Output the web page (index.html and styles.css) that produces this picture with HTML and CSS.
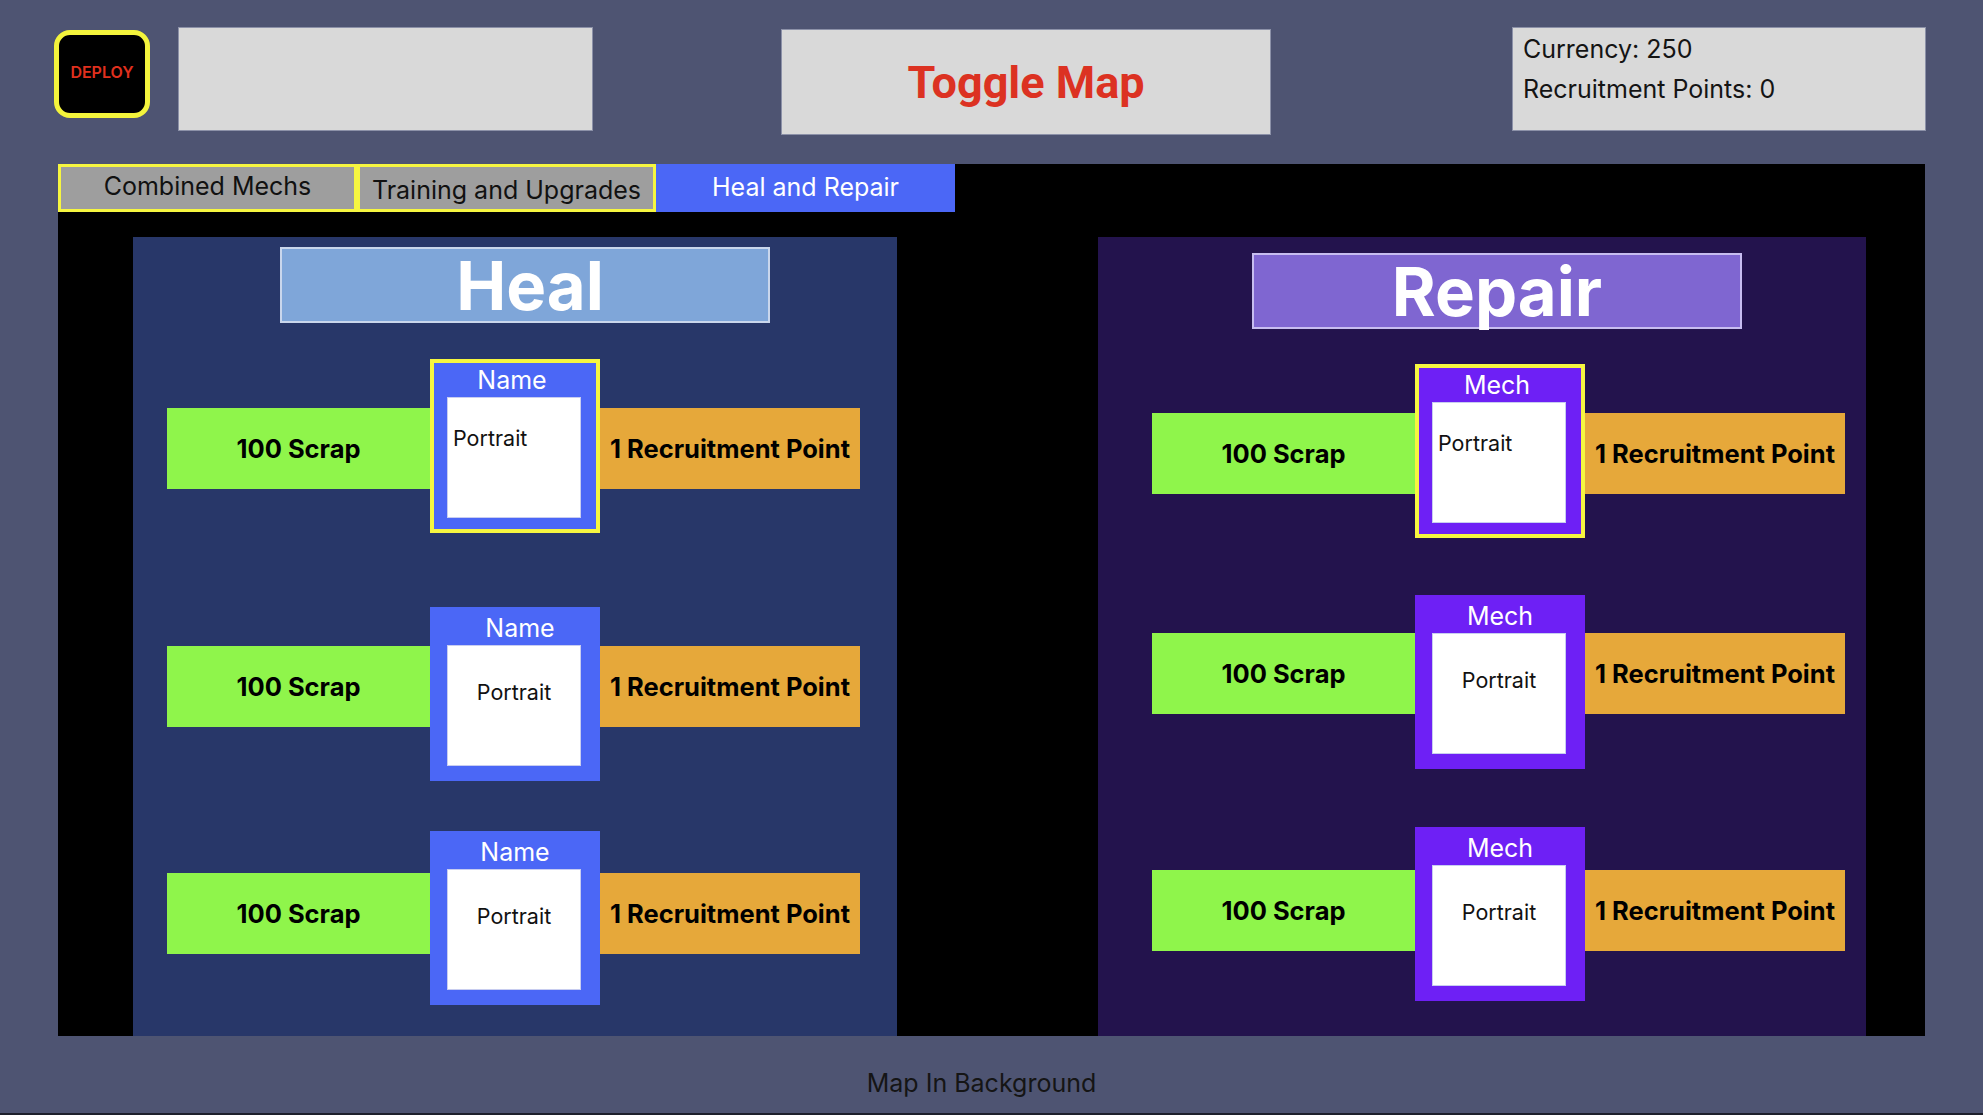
FILE: index.html
```html
<!DOCTYPE html>
<html>
<head>
<meta charset="utf-8">
<link rel="stylesheet" href="styles.css">
</head>
<body>
<header class="topbar">
  <button class="deploy">DEPLOY</button>
  <div class="blank-box"></div>
  <div class="toggle-box">Toggle Map</div>
  <div class="stats-box">
    <div class="stat">Currency: 250</div>
    <div class="stat">Recruitment Points: 0</div>
  </div>
</header>

<main class="stage">
  <nav class="tabs">
    <div class="tab">Combined Mechs</div>
    <div class="tab tab-low">Training and Upgrades</div>
    <div class="tab tab-active">Heal and Repair</div>
  </nav>

  <div class="panels">
    <section class="panel panel-heal">
      <div class="panel-title">Heal</div>

      <div class="row row-1">
        <div class="bar bar-green">100 Scrap</div>
        <div class="card selected">
          <div class="card-name name-l">Name</div>
          <div class="portrait portrait-left">Portrait</div>
        </div>
        <div class="bar bar-orange">1 Recruitment Point</div>
      </div>

      <div class="row row-2">
        <div class="bar bar-green">100 Scrap</div>
        <div class="card">
          <div class="card-name name-r">Name</div>
          <div class="portrait">Portrait</div>
        </div>
        <div class="bar bar-orange">1 Recruitment Point</div>
      </div>

      <div class="row row-3">
        <div class="bar bar-green">100 Scrap</div>
        <div class="card">
          <div class="card-name">Name</div>
          <div class="portrait">Portrait</div>
        </div>
        <div class="bar bar-orange">1 Recruitment Point</div>
      </div>
    </section>

    <section class="panel panel-repair">
      <div class="panel-title">Repair</div>

      <div class="row row-1">
        <div class="bar bar-green">100 Scrap</div>
        <div class="card selected">
          <div class="card-name name-l">Mech</div>
          <div class="portrait portrait-left">Portrait</div>
        </div>
        <div class="bar bar-orange">1 Recruitment Point</div>
      </div>

      <div class="row row-2">
        <div class="bar bar-green">100 Scrap</div>
        <div class="card">
          <div class="card-name">Mech</div>
          <div class="portrait">Portrait</div>
        </div>
        <div class="bar bar-orange">1 Recruitment Point</div>
      </div>

      <div class="row row-3">
        <div class="bar bar-green">100 Scrap</div>
        <div class="card">
          <div class="card-name">Mech</div>
          <div class="portrait">Portrait</div>
        </div>
        <div class="bar bar-orange">1 Recruitment Point</div>
      </div>
    </section>
  </div>
</main>

<footer class="footer">Map In Background</footer>
</body>
</html>
```

FILE: styles.css
```css
* { box-sizing: border-box; }

html, body {
  margin: 0;
  padding: 0;
}

body {
  width: 1983px;
  height: 1115px;
  overflow: hidden;
  background: #4e5472;
  font-family: Inter, "Noto Sans", "Liberation Sans", sans-serif;
  border-bottom: 2px solid #1d1f2b;
  display: flex;
  flex-direction: column;
}

/* ---------- top bar ---------- */
.topbar {
  display: flex;
  align-items: flex-start;
  padding: 27px 0 0 54px;
  height: 164px;
}

.deploy {
  margin-top: 3px;
  width: 96px;
  height: 88px;
  background: #000;
  border: 5px solid #f4f43c;
  border-radius: 16px;
  color: #e0301e;
  font-family: Inter, "Noto Sans", sans-serif;
  font-weight: 600;
  font-size: 16px;
  padding: 0 0 4px 0;
}

.blank-box {
  margin-left: 28px;
  width: 415px;
  height: 104px;
  background: #d9d9d9;
  border: 1px solid #8c91a8;
}

.toggle-box {
  margin-left: 188px;
  margin-top: 2px;
  width: 490px;
  height: 106px;
  background: #d9d9d9;
  border: 1px solid #8c91a8;
  display: flex;
  align-items: center;
  justify-content: center;
  font-family: Roboto, "Liberation Sans", sans-serif;
  font-weight: 700;
  font-size: 45px;
  color: #dc3222;
}

.stats-box {
  margin-left: 241px;
  width: 414px;
  height: 104px;
  background: #d9d9d9;
  border: 1px solid #8c91a8;
  padding: 1px 0 0 10px;
}

.stat {
  font-size: 25px;
  line-height: 40px;
  color: #141414;
}

/* ---------- main stage ---------- */
.stage {
  margin-left: 58px;
  width: 1867px;
  height: 872px;
  background: #000;
  display: flex;
  flex-direction: column;
}

.tabs {
  display: flex;
  height: 48px;
}

.tab {
  width: 299px;
  height: 48px;
  background: #9e9e9e;
  border: 3px solid #f6f640;
  display: flex;
  align-items: center;
  justify-content: center;
  font-size: 25px;
  color: #111;
  padding-bottom: 4px;
}

.tab-low {
  padding-bottom: 0;
  padding-top: 4px;
}

.tab-active {
  background: #4b67f6;
  border-color: #4b67f6;
  color: #fff;
  padding: 0 0 2px 0;
}

.panels {
  flex: 1;
  display: flex;
  padding-top: 25px;
}

.panel {
  display: flex;
  flex-direction: column;
}

.panel-heal {
  margin-left: 75px;
  width: 764px;
  background: #283769;
}

.panel-repair {
  margin-left: 201px;
  width: 768px;
  background: #23134d;
}

.panel-title {
  width: 490px;
  height: 76px;
  display: flex;
  align-items: center;
  justify-content: center;
  color: #fff;
  font-weight: 700;
  font-size: 67px;
  border: 2px solid #c9d6ec;
}

.panel-heal .panel-title {
  margin: 10px 0 0 147px;
  padding-left: 10px;
  background: #7fa6d9;
}

.panel-repair .panel-title {
  margin: 16px 0 0 154px;
  background: #7f66d1;
  border-color: #c7bdf0;
}

/* ---------- rows ---------- */
.row {
  display: flex;
  align-items: flex-start;
}

.panel-heal .row { margin-left: 34px; }
.panel-repair .row { margin-left: 54px; }

.panel-heal .row-1 { margin-top: 36px; }
.panel-heal .row-2 { margin-top: 74px; }
.panel-heal .row-3 { margin-top: 50px; }

.panel-repair .row-1 { margin-top: 35px; }
.panel-repair .row-2 { margin-top: 57px; }
.panel-repair .row-3 { margin-top: 58px; }

.bar {
  height: 81px;
  display: flex;
  align-items: center;
  justify-content: center;
  font-weight: 700;
  font-size: 25.5px;
  color: #000;
}

.row-1 .bar { margin-top: 49px; }
.row-2 .bar { margin-top: 39px; }
.row-3 .bar { margin-top: 42px; }
.panel-repair .row-2 .bar { margin-top: 38px; }
.panel-repair .row-3 .bar { margin-top: 43px; }

.bar-green {
  width: 263px;
  background: #8ff54b;
}

.bar-orange {
  width: 260px;
  background: #e6a83a;
}

.card {
  width: 170px;
  height: 174px;
  border: 4px solid #4b67f6;
  background: #4b67f6;
}

.panel-repair .card {
  background: #6e20f5;
  border-color: #6e20f5;
}

.card.selected,
.panel-repair .card.selected {
  border-color: #f6f640;
}

.card-name {
  height: 34px;
  line-height: 34px;
  text-align: center;
  color: #fff;
  font-size: 25px;
}

.name-l { padding-right: 6px; }
.name-r { padding-left: 10px; }

.portrait {
  width: 134px;
  height: 121px;
  margin-left: 13px;
  background: #fff;
  border: 1px solid #c8cdf0;
  color: #111;
  font-size: 21.5px;
  line-height: 24px;
  text-align: center;
  padding-top: 34px;
}

.portrait-left {
  text-align: left;
  padding: 28px 0 0 5px;
}

/* ---------- footer ---------- */
.footer {
  margin-top: 32px;
  text-align: center;
  padding-right: 20px;
  font-size: 25px;
  line-height: 30px;
  color: #151515;
}
```
